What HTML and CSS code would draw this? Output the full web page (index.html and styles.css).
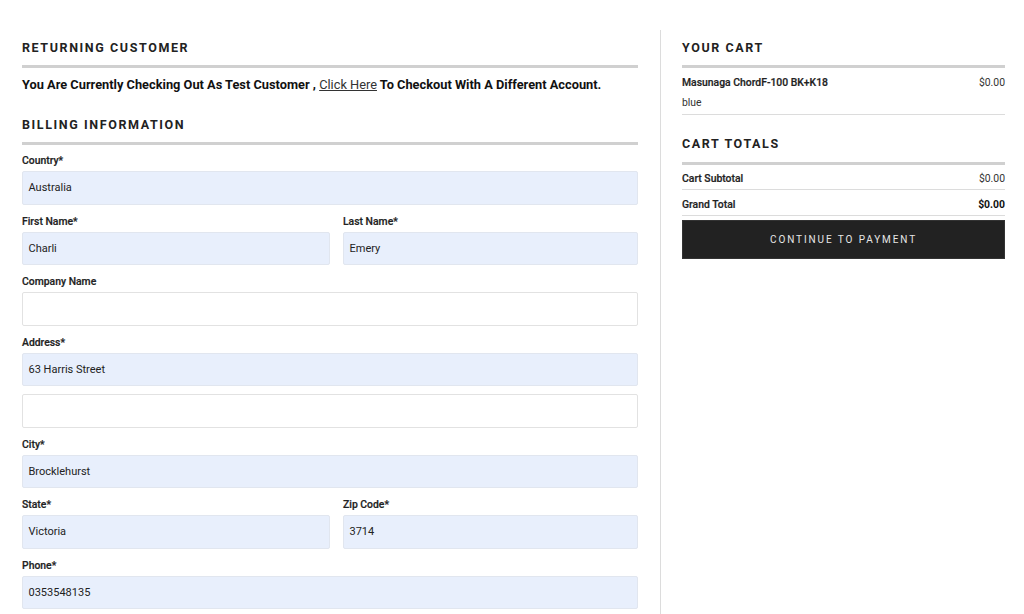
FILE: index.html
```html
<!DOCTYPE html>
<html>
<head>
<meta charset="utf-8">
<link rel="stylesheet" href="styles.css">
</head>
<body>
<div class="page">
  <main class="main-col">
    <h2 class="section-title">Returning Customer</h2>
    <div class="rule"></div>
    <p class="notice">You Are Currently Checking Out As Test Customer , <a href="#" class="link">Click Here</a> To Checkout With A Different Account.</p>
    <h2 class="section-title billing">Billing Information</h2>
    <div class="rule"></div>
    <form class="form">
      <div class="field">
        <label class="label">Country*</label>
        <div class="input filled">Australia</div>
      </div>
      <div class="row">
        <div class="field">
          <label class="label">First Name*</label>
          <div class="input filled">Charli</div>
        </div>
        <div class="field">
          <label class="label">Last Name*</label>
          <div class="input filled">Emery</div>
        </div>
      </div>
      <div class="field">
        <label class="label">Company Name</label>
        <div class="input"></div>
      </div>
      <div class="field">
        <label class="label">Address*</label>
        <div class="input filled">63 Harris Street</div>
        <div class="input second"></div>
      </div>
      <div class="field">
        <label class="label">City*</label>
        <div class="input filled">Brocklehurst</div>
      </div>
      <div class="row">
        <div class="field">
          <label class="label">State*</label>
          <div class="input filled">Victoria</div>
        </div>
        <div class="field">
          <label class="label">Zip Code*</label>
          <div class="input filled">3714</div>
        </div>
      </div>
      <div class="field">
        <label class="label">Phone*</label>
        <div class="input filled">0353548135</div>
      </div>
    </form>
  </main>
  <aside class="side-col">
    <h2 class="section-title">Your Cart</h2>
    <div class="rule"></div>
    <div class="cart-item">
      <div class="item-line">
        <span class="item-name">Masunaga ChordF-100 BK+K18</span>
        <span class="item-price">$0.00</span>
      </div>
      <div class="item-option">blue</div>
    </div>
    <h2 class="section-title totals">Cart Totals</h2>
    <div class="rule side-rule"></div>
    <div class="total-row">
      <span class="total-label">Cart Subtotal</span>
      <span class="total-value">$0.00</span>
    </div>
    <div class="total-row grand">
      <span class="total-label">Grand Total</span>
      <span class="total-value">$0.00</span>
    </div>
    <button class="pay-btn" type="button">Continue to Payment</button>
  </aside>
</div>
</body>
</html>
```

FILE: styles.css
```css
* { box-sizing: border-box; }
html, body {
  margin: 0;
  padding: 0;
  background: #fff;
  height: 100%;
  overflow: hidden;
}
body {
  font-family: Roboto, "Liberation Sans", Arial, sans-serif;
  color: #222;
}
.page {
  display: flex;
  margin-top: 30px;
  height: 584px;
}
.main-col {
  width: 660px;
  padding: 9px 22px 0 22px;
}
.side-col {
  flex: 1;
  border-left: 1px solid #dcdcdc;
  padding: 9px 19px 0 21px;
}
.section-title {
  margin: 0;
  font-size: 12.5px;
  line-height: 18px;
  font-weight: 700;
  letter-spacing: 1.6px;
  text-transform: uppercase;
  color: #222;
}
.rule {
  height: 3px;
  background: #d0d0d0;
  margin-top: 8px;
}
.notice {
  margin: 7px 0 0 0;
  font-size: 12.8px;
  line-height: 20px;
  font-weight: 700;
  color: #111;
}
.link {
  color: #333;
  font-weight: 400;
  text-decoration: underline;
}
.billing {
  margin-top: 21px;
}
.form {
  margin-top: 8px;
  display: flex;
  flex-direction: column;
  gap: 9px;
}
.row {
  display: grid;
  grid-template-columns: 308px 1fr;
  column-gap: 13px;
}
.field {
  display: flex;
  flex-direction: column;
}
.label {
  font-size: 10.4px;
  line-height: 15px;
  font-weight: 500;
  color: #222;
  margin-bottom: 3px;
  -webkit-text-stroke: 0.2px #222;
}
.input {
  height: 33.5px;
  border: 1px solid #e2e2e2;
  border-radius: 2px;
  background: #fff;
  font-size: 11px;
  line-height: 31.5px;
  padding-left: 5.5px;
  color: #222;
}
.input.filled {
  background: #e8effc;
  border-color: #e1e6ef;
}
.input.second {
  margin-top: 8px;
}
.cart-item {
  margin-top: 7px;
  border-bottom: 1px solid #dcdcdc;
  padding-bottom: 3.5px;
}
.item-line {
  display: flex;
  justify-content: space-between;
  font-size: 10.4px;
  line-height: 15px;
}
.item-name { font-weight: 500; -webkit-text-stroke: 0.2px #222; }
.item-price { color: #333; }
.item-option {
  margin-top: 5px;
  font-size: 10.4px;
  line-height: 15px;
  color: #333;
}
.totals {
  margin-top: 20px;
}
.side-rule {
  margin-top: 9px;
}
.total-row {
  display: flex;
  justify-content: space-between;
  font-size: 10.4px;
  line-height: 15px;
  padding: 6.5px 0 3px 0;
  border-bottom: 1px solid #dcdcdc;
}
.total-label { font-weight: 500; -webkit-text-stroke: 0.2px #222; }
.total-value { color: #333; }
.grand .total-value { font-weight: 700; color: #111; }
.pay-btn {
  display: block;
  width: 100%;
  height: 39px;
  margin-top: 4px;
  background: #222;
  color: #e6e6e6;
  border: 1px solid #333;
  font-family: Roboto, "Liberation Sans", Arial, sans-serif;
  font-size: 10px;
  letter-spacing: 1.9px;
  text-transform: uppercase;
  cursor: pointer;
}
```
